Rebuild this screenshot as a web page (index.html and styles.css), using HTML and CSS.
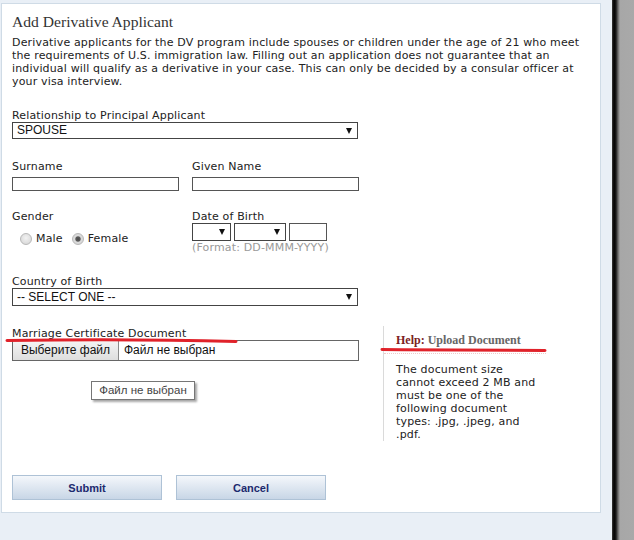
FILE: index.html
```html
<!DOCTYPE html>
<html>
<head>
<meta charset="utf-8">
<title>Add Derivative Applicant</title>
<link rel="stylesheet" href="styles.css">
</head>
<body>
<div class="screen">
  <div class="page">
    <div class="panel">
      <h1 class="title">Add Derivative Applicant</h1>
      <p class="intro">Derivative applicants for the DV program include spouses or children under the age of 21 who meet the requirements of U.S. immigration law. Filling out an application does not guarantee that an individual will qualify as a derivative in your case. This can only be decided by a consular officer at your visa interview.</p>

      <div class="field rel">
        <div class="label">Relationship to Principal Applicant</div>
        <div class="select wide"><span class="val">SPOUSE</span><span class="arrow"></span></div>
      </div>

      <div class="grid names">
        <div class="field">
          <div class="label">Surname</div>
          <div class="input"></div>
        </div>
        <div class="field">
          <div class="label">Given Name</div>
          <div class="input"></div>
        </div>
      </div>

      <div class="grid gender-dob">
        <div class="field">
          <div class="label">Gender</div>
          <div class="radios">
            <span class="radio"></span><span class="rlabel">Male</span>
            <span class="radio checked"></span><span class="rlabel">Female</span>
          </div>
        </div>
        <div class="field">
          <div class="label">Date of Birth</div>
          <div class="dob">
            <div class="select day"><span class="arrow"></span></div>
            <div class="select month"><span class="arrow"></span></div>
            <div class="input year"></div>
          </div>
          <div class="hint">(Format: DD-MMM-YYYY)</div>
        </div>
      </div>

      <div class="field country">
        <div class="label">Country of Birth</div>
        <div class="select wide tall"><span class="val">-- SELECT ONE --</span><span class="arrow"></span></div>
      </div>

      <div class="doc-row">
        <div class="field doc">
          <div class="label">Marriage Certificate Document</div>
          <div class="file">
            <span class="file-btn">Выберите файл</span>
            <span class="file-name">Файл не выбран</span>
            <span class="tooltip">Файл не выбран</span>
          </div>
        </div>
        <aside class="help">
          <div class="help-head"><span class="help-key">Help:</span> Upload Document</div>
          <p class="help-body">The document size cannot exceed 2 MB and must be one of the following document types: .jpg, .jpeg, and .pdf.</p>
        </aside>
      </div>

      <div class="actions">
        <button class="btn">Submit</button>
        <button class="btn">Cancel</button>
      </div>
    </div>
  </div>
  <div class="edge"></div>
</div>
<svg class="marks" width="634" height="540" viewBox="0 0 634 540">
  <path d="M7 340.5 C 80 339.5, 160 339.5, 236 341.5" stroke="#e0222a" stroke-width="3" fill="none" stroke-linecap="round"/>
  <path d="M382 349.5 C 440 350, 500 350.5, 545 350.5" stroke="#e0222a" stroke-width="3" fill="none" stroke-linecap="round"/>
</svg>
</body>
</html>
```

FILE: styles.css
```css
html, body {
  margin: 0;
  padding: 0;
}
body {
  width: 634px;
  height: 540px;
  overflow: hidden;
  background: #e9eff6;
  position: relative;
  font-family: "DejaVu Sans", Verdana, sans-serif;
  color: #222;
}
.screen {
  display: flex;
  width: 634px;
  height: 540px;
}
.page {
  width: 612px;
  background: #e9eff6;
}
.edge {
  width: 22px;
  background: linear-gradient(to right, #3a3a3a 0, #000 2px, #1a1a1a 4px, #6a6a6a 6px, #a7a7a7 8px, #a9a9a9 100%);
}
.panel {
  box-sizing: border-box;
  width: 600px;
  margin: 3px 0 0 1px;
  background: #fff;
  border: 1px solid #cfdbe6;
  padding: 8px 10px 12px 10px;
}
.title {
  margin: 0;
  font-family: "Liberation Serif", "Times New Roman", serif;
  font-weight: normal;
  font-size: 15.6px;
  line-height: 20px;
  color: #333;
}
.intro {
  margin: 4px 0 0 0;
  font-size: 11px;
  letter-spacing: 0.16px;
  line-height: 13px;
  color: #222;
}
.label {
  font-size: 11px;
  letter-spacing: 0.16px;
  line-height: 13px;
  color: #222;
}
.field.rel {
  margin-top: 21px;
}
.select {
  box-sizing: border-box;
  position: relative;
  height: 17px;
  border: 1px solid #444;
  background: #fff;
  font-family: "Liberation Sans", Arial, sans-serif;
  font-size: 12px;
  line-height: 15px;
  color: #111;
}
.select.wide {
  width: 346px;
}
.select.tall {
  height: 18px;
  line-height: 16px;
}
.select .val {
  padding-left: 4px;
}
.arrow {
  position: absolute;
  right: 5px;
  top: 5px;
  width: 0;
  height: 0;
  border-left: 3px solid transparent;
  border-right: 3px solid transparent;
  border-top: 6px solid #111;
}
.grid {
  display: grid;
  grid-template-columns: 167px 167px;
  column-gap: 13px;
}
.names {
  margin-top: 21px;
}
.input {
  box-sizing: border-box;
  height: 14px;
  border: 1px solid #555;
  background: #fff;
}
.names .input {
  margin-top: 4px;
}
.gender-dob {
  margin-top: 19px;
}
.radios {
  display: flex;
  align-items: center;
  margin-top: 9px;
  padding-left: 8px;
  height: 13px;
}
.radio {
  box-sizing: border-box;
  width: 12px;
  height: 12px;
  border-radius: 50%;
  border: 1px solid #b8b8b8;
  background: radial-gradient(circle at 50% 40%, #f2f2f2 0, #dcdcdc 70%, #cfcfcf 100%);
}
.radio.checked {
  background: radial-gradient(circle, #4a4a4a 0, #5a5a5a 2.2px, #dcdcdc 3.2px, #d0d0d0 100%);
}
.rlabel {
  font-size: 11px;
  letter-spacing: 0.16px;
  line-height: 13px;
  margin-left: 4px;
  margin-right: 9px;
  color: #222;
}
.dob {
  display: flex;
  gap: 3px;
}
.dob .select {
  height: 18px;
}
.dob .day { width: 39px; }
.dob .month { width: 52px; }
.dob .year {
  width: 38px;
  height: 18px;
  border-color: #555;
}
.hint {
  font-size: 11px;
  letter-spacing: 0.16px;
  line-height: 13px;
  color: #9a9a9a;
}
.country {
  margin-top: 21px;
}
.doc-row {
  display: flex;
  align-items: flex-start;
  margin-top: 21px;
}
.doc {
  width: 347px;
}
.file {
  position: relative;
  box-sizing: border-box;
  display: flex;
  align-items: stretch;
  height: 21px;
  border: 1px solid #666;
  font-family: "Liberation Sans", Arial, sans-serif;
  font-size: 12px;
}
.file-btn {
  box-sizing: border-box;
  width: 106px;
  border-right: 1px solid #8a8a8a;
  background: linear-gradient(#f4f4f4, #dedede);
  text-align: center;
  line-height: 19px;
  color: #111;
}
.file-name {
  padding-left: 5px;
  line-height: 19px;
  color: #111;
}
.tooltip {
  position: absolute;
  left: 78px;
  top: 40px;
  box-sizing: border-box;
  width: 104px;
  height: 19px;
  border: 1px solid #767676;
  background: #fff;
  box-shadow: 2px 2px 2px rgba(0, 0, 0, 0.35);
  font-size: 11.5px;
  line-height: 17px;
  text-align: center;
  color: #444;
}
.help {
  box-sizing: border-box;
  width: 163px;
  margin-left: 24px;
  margin-top: -1px;
  height: 115px;
  border-left: 1px solid #dadada;
}
.help-head {
  margin-top: 7px;
  padding-left: 12px;
  padding-bottom: 6px;
  border-bottom: 1px dotted #f0c8c8;
  font-family: "Liberation Serif", "Times New Roman", serif;
  font-weight: bold;
  font-size: 12px;
  line-height: 14px;
  color: #666;
}
.help-key {
  color: #7a2222;
}
.help-body {
  margin: 9px 0 0 0;
  padding: 0 10px 0 12px;
  font-size: 11px;
  letter-spacing: 0.16px;
  line-height: 13px;
  color: #222;
}
.actions {
  display: flex;
  gap: 14px;
  margin-top: 34px;
}
.btn {
  box-sizing: border-box;
  width: 150px;
  height: 25px;
  margin: 0;
  padding: 0;
  border: 1px solid #aec2d6;
  background: linear-gradient(#f4f7fb, #c8d6e6);
  font-family: "Liberation Sans", Arial, sans-serif;
  font-weight: bold;
  font-size: 11px;
  color: #1c2a6e;
}
.marks {
  position: absolute;
  left: 0;
  top: 0;
  pointer-events: none;
}
```
